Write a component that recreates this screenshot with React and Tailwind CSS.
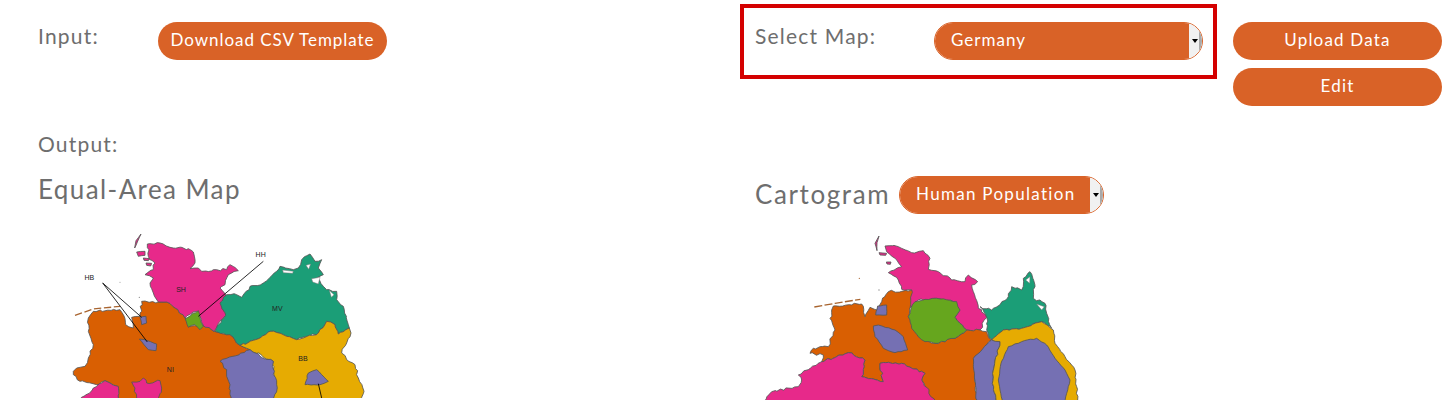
import React from 'react';

const btn = 'h-[38px] pb-[2px] rounded-full bg-[#d96227] text-white text-[17px] flex items-center justify-center';
const label = 'text-[#6e6e6e] tracking-[1.2px]';
const heading = 'text-[#6e6e6e] tracking-[1.4px]';

const Select = ({ value, className }) => (
    <div className={`h-[38px] rounded-full overflow-hidden border border-[#d96227] flex text-white text-[17px] ${className}`}>
        <div className="flex-1 bg-[#d96227] pl-4 pb-[2px] flex items-center">{value}</div>
        <div className="w-[13px] bg-[#f1f1f1] flex items-center">
            <div className="ml-[3px] w-0 h-0 border-x-[3px] border-x-transparent border-t-[4px] border-t-black" />
            <div className="ml-[1px] w-[3px] h-full bg-[#a9a9a9]" />
        </div>
    </div>
);

// rough coast: split every edge and push the points a little, same result for a shared edge
const rough = (d, amp) => {
    const pts = d.trim().split(/\s+/).map((p) => p.split(',').map(Number));
    const out = [];
    pts.forEach((a, i) => {
        const b = pts[(i + 1) % pts.length];
        out.push(a.join(','));
        const len = Math.hypot(b[0] - a[0], b[1] - a[1]);
        const n = Math.floor(len / 9);
        for (let k = 1; k < n; k++) {
            const t = k / n;
            const x = a[0] + (b[0] - a[0]) * t;
            const y = a[1] + (b[1] - a[1]) * t;
            const s = Math.sin(Math.round(x) * 12.9898 + Math.round(y) * 78.233) * 43758.5453;
            const r = (s - Math.floor(s)) - 0.5;
            const c = Math.sin(Math.round(x) * 39.346 + Math.round(y) * 11.135) * 24634.6345;
            const q = (c - Math.floor(c)) - 0.5;
            out.push(`${(x + r * amp).toFixed(1)},${(y + q * amp).toFixed(1)}`);
        }
    });
    return out.join(' ');
};

const Shape = ({ fill, d, amp = 7 }) => (
    <polygon points={rough(d, amp)} fill={fill} stroke="#555" strokeWidth="2.5" strokeLinejoin="round" />
);
const Hole = ({ d }) => <polygon points={d} fill="#fff" stroke="#777" strokeWidth="1.5" />;

const EqualAreaMap = () => (
    <svg width="320" height="170" viewBox="0 0 960 510" className="block">
        <g fill="none" stroke="#a8642f" strokeWidth="4" strokeDasharray="22 8">
            <path d="M45 262 L100 243 L180 235" />
        </g>
        <circle cx="180" cy="163" r="1.5" fill="#888" />
        <circle cx="238" cy="208" r="2" fill="#888" />
        <Shape fill="#d95f02" d="85,270 100,250 180,245 195,272 197,290 220,300 215,268 240,265 245,220 295,222 320,222 345,240 375,270 390,295 430,292 462,310 510,320 540,352 570,365 510,530 180,530 175,480 150,465 135,458 110,470 60,460 40,440 40,430 50,420 75,415 85,390 100,350 85,310" />
        <Shape fill="#e7298a" d="262,48 300,45 330,58 385,62 400,72 405,105 390,122 415,120 425,130 470,125 500,125 510,110 535,128 515,135 505,140 495,170 480,180 500,205 480,225 497,262 480,280 462,310 430,292 418,262 410,250 375,270 345,240 320,222 295,222 280,195 270,165 280,150 255,140 280,125 285,105 265,85" />
        <Shape fill="#e7298a" d="243,18 228,38 224,60 232,42" amp={1} />
        <Shape fill="#e7298a" d="230,72 255,70 255,82 235,85" amp={2} />
        <Shape fill="#e7298a" d="250,90 268,92 265,98 252,97" amp={1} />
        <Shape fill="#e7298a" d="258,105 275,106 272,114 260,112" amp={1} />
        <Shape fill="#1b9e77" d="480,225 500,200 530,200 545,208 570,175 610,165 650,130 660,115 700,125 715,120 725,95 750,78 765,100 785,95 775,120 790,140 770,150 790,175 800,185 830,190 830,215 850,235 868,300 835,318 825,290 800,280 770,320 740,325 710,335 680,325 630,310 600,330 540,352 510,320 465,310 497,262" />
        <Hole d="668,126 700,130 698,136 670,134" />
        <Hole d="738,112 752,108 746,124" />
        <Hole d="755,152 780,148 775,168 758,162" />
        <Hole d="808,187 822,200 814,208" />
        <Shape fill="#e6ab02" d="540,352 600,330 630,310 680,325 710,335 770,320 800,280 825,290 835,318 868,300 873,315 860,345 845,375 860,395 885,410 895,450 912,490 905,530 640,530 640,400 570,365" />
        <Shape fill="#7570b3" d="480,400 570,365 600,385 640,400 640,440 650,470 640,530 515,530 510,470 500,445 500,425" />
        <Shape fill="#e7298a" d="45,530 100,480 135,458 150,465 175,475 180,530" />
        <Shape fill="#e7298a" d="215,462 240,460 250,450 260,465 300,458 305,480 285,530 230,530 225,480" />
        <Shape fill="#7570b3" d="735,470 745,435 770,425 785,440 805,460 780,470" amp={3} />
        <Shape fill="#7570b3" d="240,268 258,265 260,285 245,290" amp={2} />
        <Shape fill="#7570b3" d="238,333 255,335 290,348 288,368 265,365" amp={2} />
        <Shape fill="#66a61e" d="375,272 415,248 420,270 430,295 420,305 405,290 385,298" amp={3} />
        <g stroke="#000" strokeWidth="2.5">
            <line x1="128" y1="165" x2="245" y2="268" />
            <line x1="128" y1="165" x2="262" y2="342" />
            <line x1="610" y1="100" x2="415" y2="265" />
            <line x1="775" y1="467" x2="785" y2="510" />
        </g>
        <g fontSize="21" fill="#222" textAnchor="middle" style={{ fontFamily: '"Liberation Sans", sans-serif' }}>
            <text x="363" y="191">SH</text>
            <text x="652" y="248">MV</text>
            <text x="729" y="398">BB</text>
            <text x="331" y="431">NI</text>
            <text x="602" y="86">HH</text>
            <text x="88" y="155">HB</text>
        </g>
    </svg>
);

const CartogramMap = () => (
    <svg width="330" height="170" viewBox="0 0 990 510" className="block">
        <g fill="none" stroke="#a8642f" strokeWidth="4" strokeDasharray="24 7">
            <path d="M178 231 L240 220 L316 208" />
        </g>
        <circle cx="313" cy="145" r="2" fill="#a8642f" />
        <circle cx="372" cy="180" r="2" fill="#888" />
        <Shape fill="#e7298a" d="390,48 430,50 470,68 505,62 525,85 520,118 550,125 590,150 630,155 640,135 668,155 650,165 655,185 670,235 695,262 675,300 635,300 600,262 615,240 595,215 545,205 490,210 460,240 470,180 440,178 430,150 400,128 440,110 420,85 395,65" />
        <Shape fill="#e7298a" d="372,18 360,40 366,62 366,38" amp={1} />
        <Shape fill="#e7298a" d="372,68 395,70 392,76 375,75" amp={1} />
        <Shape fill="#e7298a" d="394,96 408,96 406,103 396,102" amp={1} />
        <Shape fill="#d95f02" d="380,215 400,185 470,180 460,260 490,320 540,340 600,325 635,300 675,300 695,305 710,330 660,380 665,530 540,530 500,450 510,430 440,400 375,400 385,455 320,440 330,390 280,368 200,395 205,375 165,370 175,355 220,350 240,300 225,265 235,228 320,222 330,260 345,232 365,240" />
        <Shape fill="#66a61e" d="460,260 468,235 480,215 510,208 545,205 605,215 615,240 600,262 635,300 600,325 540,340 510,335 490,320 470,295" amp={5} />
        <Shape fill="#1b9e77" d="675,230 710,240 760,200 770,170 800,180 805,145 825,125 840,170 835,205 870,220 875,250 890,295 860,275 800,295 745,300 710,328 695,300 695,262" />
        <Hole d="812,150 825,140 824,160" />
        <Hole d="845,222 868,230 860,240" />
        <Shape fill="#e7298a" d="10,530 50,485 130,470 140,450 130,435 200,395 280,368 330,390 320,440 385,455 375,400 440,400 510,430 500,450 550,530" />
        <Shape fill="#7570b3" d="355,288 370,285 420,300 445,320 458,360 420,368 385,355 360,320" amp={3} />
        <Shape fill="#7570b3" d="368,228 395,225 395,255 362,255" amp={2} />
        <Shape fill="#7570b3" d="655,385 710,328 735,335 715,420 712,460 730,530 665,530" amp={4} />
        <Shape fill="#e6ab02" d="710,330 745,300 800,295 860,275 895,300 900,340 930,380 960,420 965,470 968,530 730,530 712,460 715,420 735,335" amp={5} />
        <Shape fill="#7570b3" d="730,450 738,400 760,350 800,335 845,325 875,345 900,385 930,420 945,450 935,490 925,530 745,530 735,480" amp={3} />
    </svg>
);

export default function App() {
    return (
        <div className="w-[1455px] h-[400px] overflow-hidden bg-white" style={{ fontFamily: 'Lato, "Noto Sans", sans-serif' }}>
            <div className="flex h-[106px] pt-[4px]">
                <div className="w-[740px] pl-[38px] pt-[18px] flex items-start">
                    <div className={`w-[120px] text-[21px] leading-[28px] ${label}`}>Input:</div>
                    <button className={`${btn} w-[229px] tracking-[0.95px]`}>Download CSV Template</button>
                </div>
                <div className="w-[477px] h-[75px] border-[4px] border-[#d40000] pl-[11px] pt-[14px] flex items-start">
                    <div className={`w-[179px] text-[21px] leading-[28px] ${label}`}>Select Map:</div>
                    <Select value="Germany" className="w-[269px] tracking-[1px]" />
                </div>
                <div className="ml-[16px] w-[209px] pt-[18px] flex flex-col gap-2">
                    <button className={`${btn} tracking-[1.2px]`}>Upload Data</button>
                    <button className={`${btn} tracking-[1.2px]`}>Edit</button>
                </div>
            </div>
            <div className="flex">
                <div className="w-[755px] pl-[38px]">
                    <div className={`mt-[24px] text-[21px] leading-[28px] ${label}`}>Output:</div>
                    <div className={`mt-[15px] text-[26px] leading-[32px] ${heading}`}>Equal-Area Map</div>
                    <div className="mt-[23px] ml-[22px]"><EqualAreaMap /></div>
                </div>
                <div>
                    <div className="mt-[70px] flex items-center">
                        <div className={`text-[26px] leading-[32px] pb-[3px] w-[144px] tracking-[1.6px] ${heading}`}>Cartogram</div>
                        <Select value="Human Population" className="w-[205px] tracking-[1.3px]" />
                    </div>
                    <div className="mt-[16px]"><CartogramMap /></div>
                </div>
            </div>
        </div>
    );
}
